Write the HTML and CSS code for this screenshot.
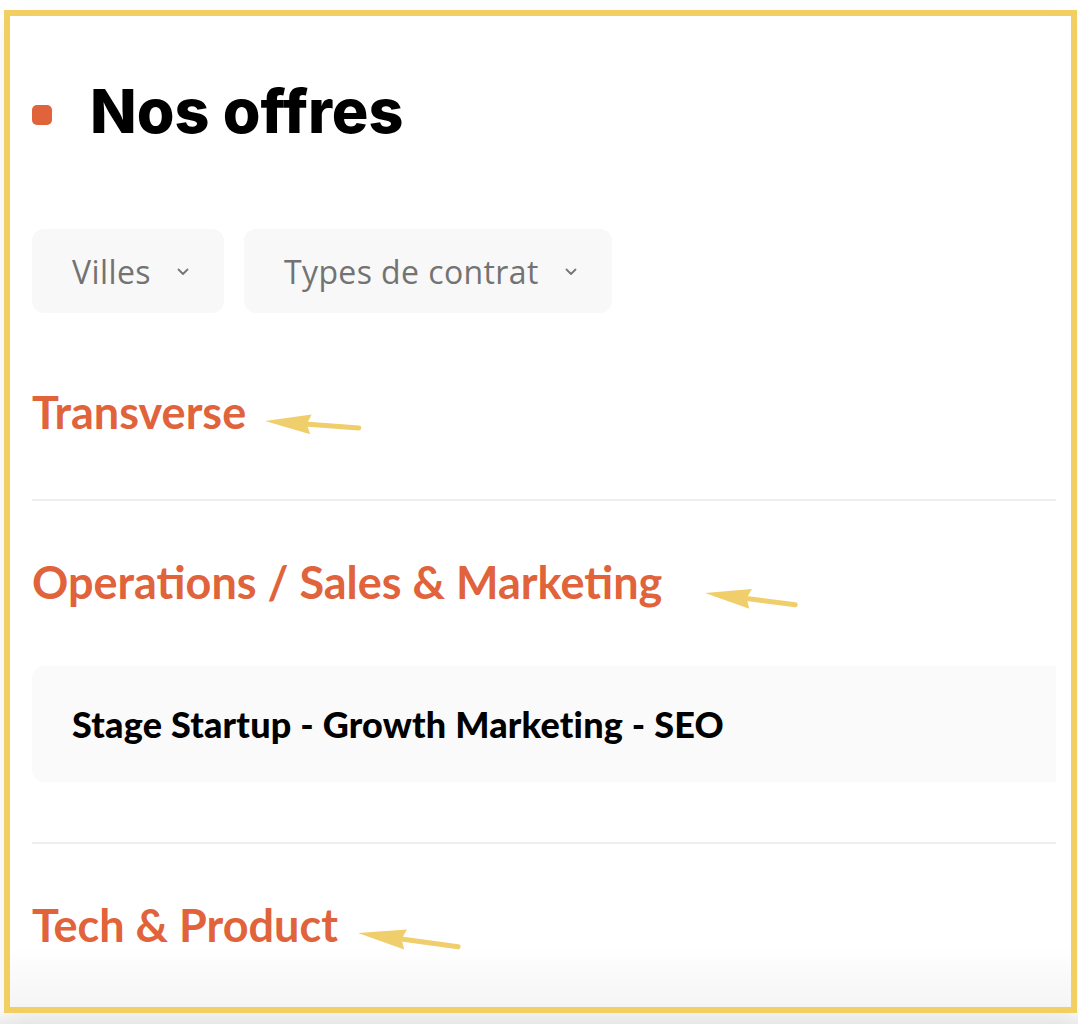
FILE: index.html
```html
<!DOCTYPE html>
<html lang="fr">
<head>
<meta charset="utf-8">
<title>Nos offres</title>
<link rel="stylesheet" href="styles.css">
</head>
<body>
<div class="frame">
  <div class="inner">
    <h1 class="title"><span class="bullet"></span>Nos offres</h1>
    <div class="filters">
      <button class="filter">Villes
        <svg class="chev" width="12" height="8" viewBox="0 0 12 8"><path d="M1.5 1.5 L6 6 L10.5 1.5" fill="none" stroke="#777" stroke-width="1.8" stroke-linecap="round" stroke-linejoin="round"/></svg>
      </button>
      <button class="filter">Types de contrat
        <svg class="chev" width="12" height="8" viewBox="0 0 12 8"><path d="M1.5 1.5 L6 6 L10.5 1.5" fill="none" stroke="#777" stroke-width="1.8" stroke-linecap="round" stroke-linejoin="round"/></svg>
      </button>
    </div>
    <section class="group first">
      <h2 class="cat">Transverse</h2>
    </section>
    <section class="group">
      <h2 class="cat">Operations / Sales &amp; Marketing</h2>
      <div class="card">Stage Startup - Growth Marketing - SEO</div>
    </section>
    <section class="group">
      <h2 class="cat">Tech &amp; Product</h2>
    </section>
  </div>
</div>
<svg class="annotations" width="1078" height="1024" viewBox="0 0 1078 1024">
  <g fill="#f0ce6c" stroke="#f0ce6c">
    <g transform="translate(265 421) rotate(4.2)">
      <polygon points="0,0 46,-10 42,0 46,10" stroke="none"/>
      <line x1="40" y1="0" x2="94" y2="0" stroke-width="5" stroke-linecap="round"/>
    </g>
    <g transform="translate(705 593) rotate(7.4)">
      <polygon points="0,0 46,-10 42,0 46,10" stroke="none"/>
      <line x1="40" y1="0" x2="91" y2="0" stroke-width="5" stroke-linecap="round"/>
    </g>
    <g transform="translate(358 933) rotate(7.8)">
      <polygon points="0,0 48,-10 44,0 48,10" stroke="none"/>
      <line x1="40" y1="0" x2="101" y2="0" stroke-width="5" stroke-linecap="round"/>
    </g>
  </g>
</svg>
</body>
</html>
```

FILE: styles.css
```css
* { box-sizing: border-box; }

html, body {
  margin: 0;
  padding: 0;
  background: #ffffff;
}

body {
  position: relative;
  width: 1078px;
  height: 1024px;
  overflow: hidden;
  background: linear-gradient(to bottom, #ffffff 0, #ffffff 1010px, #eeeeee 1024px);
}

.frame {
  margin: 10px 0 0 4px;
  width: 1073px;
  height: 1003px;
  border: 6px solid #f2cf63;
  background: linear-gradient(to bottom, #ffffff 0, #ffffff 930px, #f4f4f4 997px);
  box-shadow: 0 10px 24px rgba(0, 0, 0, 0.06);
}

.inner {
  height: 100%;
  padding: 58px 15px 0 22px;
  overflow: hidden;
}

.title {
  margin: 0;
  display: flex;
  align-items: center;
  font-family: "Inter", "Lato", sans-serif;
  font-weight: 800;
  font-size: 61px;
  line-height: 74px;
  color: #000;
}

.bullet {
  flex: none;
  width: 20px;
  height: 20px;
  border-radius: 5px;
  background: #e0633b;
  margin: 8px 38px 0 0;
}

.filters {
  display: flex;
  gap: 20px;
  margin-top: 81px;
}

.filter {
  display: flex;
  align-items: center;
  gap: 26px;
  height: 84px;
  padding: 0 35px 0 40px;
  border: 0;
  border-radius: 12px;
  background: #f8f8f8;
  font-family: "Open Sans", "Noto Sans", sans-serif;
  font-size: 32px;
  color: #737373;
  letter-spacing: 0.4px;
}

.chev { flex: none; margin-top: 2px; }

.group {
  border-top: 2px solid #eeeeee;
  padding-top: 54px;
  padding-bottom: 60px;
}

.group.first {
  border-top: 0;
  margin-top: 72px;
  padding-top: 0;
}

.cat {
  margin: 0;
  font-family: "Lato", "Inter", sans-serif;
  font-weight: 700;
  font-size: 45px;
  line-height: 54px;
  color: #e0633b;
}

.card {
  margin-top: 57px;
  padding: 38px 40px;
  border-radius: 12px 0 0 12px;
  background: #fafafa;
  font-family: "Lato", "Inter", sans-serif;
  font-weight: 900;
  font-size: 36px;
  line-height: 40px;
  letter-spacing: 0.2px;
  color: #000;
}

.annotations {
  position: absolute;
  left: 0;
  top: 0;
  pointer-events: none;
}
```
